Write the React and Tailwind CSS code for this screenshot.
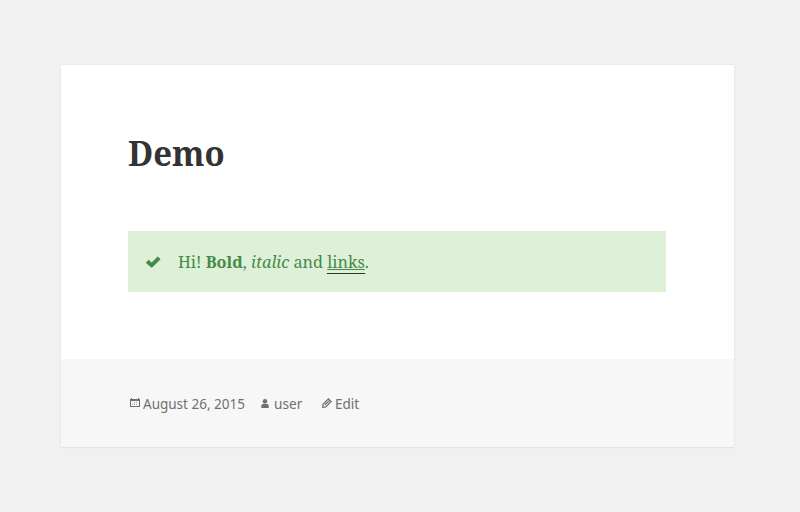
function CheckIcon() {
  return (
    <svg className="h-[12px] w-[16px]" viewBox="0 0 16 12" fill="none" stroke="#448a48" strokeWidth="4" strokeLinejoin="round">
      <path d="M2.2 5.3 6.6 9.3 14.2 1.9" />
    </svg>
  );
}

function CalendarIcon() {
  return (
    <svg className="h-[10px] w-[10px]" viewBox="0 0 10 10" fill="#707070" shapeRendering="crispEdges">
      <path fillRule="evenodd" d="M0 1h1V0h1v1h6V0h1v1h1v8H0ZM1 3v5h8V3Z" />
      <path d="M4 4h1v1H4zM6 4h1v1H6zM2 6h1v1H2zM4 6h1v1H4zM6 6h1v1H6z" opacity=".6" />
    </svg>
  );
}

function UserIcon() {
  return (
    <svg className="mt-[2px] h-[10px] w-[8px]" viewBox="0 0 8 10" fill="#707070">
      <circle cx="4" cy="2.2" r="2.2" />
      <path d="M.3 9V7c0-1.4 1.2-2.2 2.5-2.2h2.4C6.5 4.8 7.7 5.6 7.7 7v2Z" />
    </svg>
  );
}

function PencilIcon() {
  return (
    <svg className="h-[10px] w-[10px]" viewBox="0 0 10 10" fill="none" stroke="#707070" strokeWidth="1.2">
      <path d="M.7 9.3 1 6.2 6.4.9 9.1 3.5 3.8 8.9ZM3 6.8 7.3 2.6" />
    </svg>
  );
}

export default function App() {
  return (
    <div className="h-[512px] w-[800px] overflow-hidden bg-[#f1f1f1] pt-[65px] pl-[61px]">
      <article className="h-[382px] w-[673px] bg-white shadow-[0_0_1px_rgba(0,0,0,0.18),0_1px_1px_rgba(0,0,0,0.03)]">
        <div className="h-[294px] px-[67px] pt-[64px] font-['Noto_Serif','DejaVu_Serif',serif]">
          <h1 className="w-max origin-left scale-x-[0.94] text-[35px] leading-[47px] font-bold text-[#333]">Demo</h1>
          <div className="mt-[55px] flex h-[61px] w-[538px] items-center bg-[#dff0d8] pl-[17px] text-[#448a48]">
            <CheckIcon />
            <p className="ml-[17px] w-max origin-left scale-x-[0.955] text-[17px] leading-[28px] whitespace-nowrap">
              Hi! <strong className="font-bold">Bold</strong>, <em>italic</em> and{' '}
              <a className="border-b border-[#333] underline" href="#links">links</a>.
            </p>
          </div>
        </div>
        <footer className="flex h-[88px] items-center bg-[#f7f7f7] pl-[69px] font-['Noto_Sans',sans-serif] text-[15px] leading-[20px] text-[#707070]">
          <div className="flex w-[131px] items-center gap-[3px]">
            <CalendarIcon /><span className="origin-left scale-x-[0.9] whitespace-nowrap">August 26, 2015</span>
          </div>
          <div className="flex w-[61px] items-center gap-[5px]">
            <UserIcon /><span className="origin-left scale-x-[0.91]">user</span>
          </div>
          <div className="flex items-center gap-[3px]">
            <PencilIcon /><span className="origin-left scale-x-[0.9]">Edit</span>
          </div>
        </footer>
      </article>
    </div>
  );
}
